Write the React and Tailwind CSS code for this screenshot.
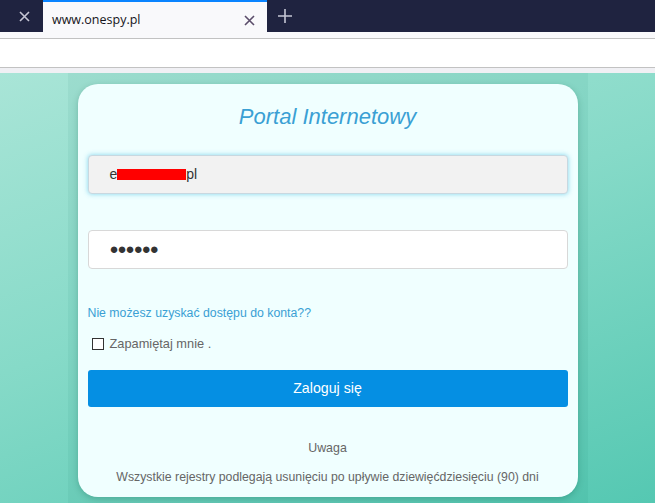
export default function App() {
  return (
    <div className="w-[655px] h-[503px] flex flex-col overflow-hidden" style={{ fontFamily: '"Liberation Sans", Arial, sans-serif' }}>
      {/* browser chrome */}
      <div className="h-[32px] bg-[#1f2340] flex items-stretch relative">
        <div className="w-[43px] flex items-center justify-center">
          <svg width="11" height="11" viewBox="0 0 11 11" className="ml-[6px]">
            <path d="M1 1L10 10M10 1L1 10" stroke="#c5c6d4" strokeWidth="1.6" />
          </svg>
        </div>
        <div className="w-[224px] bg-[#f9f9fb] border-t-2 border-[#0a84ff] flex items-center h-[38px] z-10">
          <span className="ml-[9px] text-[12.5px] text-[#15141a] flex-1" style={{ fontFamily: '"Open Sans", "Noto Sans", sans-serif' }}>www.onespy.pl</span>
          <svg width="11" height="11" viewBox="0 0 11 11" className="mr-[12px]">
            <path d="M1 1L10 10M10 1L1 10" stroke="#5b4d6a" strokeWidth="1.6" />
          </svg>
        </div>
        <div className="w-[36px] flex items-center justify-center">
          <svg width="14" height="14" viewBox="0 0 14 14">
            <path d="M7 0V14M0 7H14" stroke="#c5c6d4" strokeWidth="1.6" />
          </svg>
        </div>
      </div>
      <div className="h-[7px] bg-[#f9f9fb] border-b border-[#c2c2c2]" />
      <div className="h-[29px] bg-white border-b border-[#c2c2c2]" />
      <div className="h-[5px] bg-[#f0f0f4]" />
      {/* page */}
      <div className="flex-1 flex justify-center bg-[linear-gradient(160deg,#a9e5d7_0%,#86dac8_45%,#55c8b2_100%)]">
        <div className="w-[520px] px-[10px] pt-[11px] bg-[rgba(0,110,90,0.06)]">
          <div className="h-[413px] rounded-[20px] bg-[#f0ffff] shadow-[0_2px_6px_rgba(0,80,60,0.25)] px-[10px] pt-[19px] flex flex-col">
            <h1 className="text-center italic text-[22px] leading-[28px] text-[#3aa0d4]">Portal Internetowy</h1>
            <div className="mt-[24px] h-[39px] rounded-[4px] bg-[#f2f2f2] border border-[#c8d8e0] shadow-[0_0_5px_rgba(100,200,230,0.8)] flex items-center pl-[21px] text-[14px] text-[#333]">
              <span>e</span>
              <span className="inline-block w-[69px] h-[11px] bg-[#ff0000]" />
              <span>pl</span>
            </div>
            <div className="mt-[36px] h-[39px] rounded-[4px] bg-white border border-[#d8d8d8] flex items-center pl-[21px] text-[#333]">
              <span className="text-[15px] tracking-[-1px] font-bold">●●●●●●</span>
            </div>
            <a className="mt-[36px] text-[12.3px] leading-[16px] text-[#3aa0d4]">Nie możesz uzyskać dostępu do konta??</a>
            <div className="mt-[13px] flex items-center pl-[4px]">
              <span className="w-[12px] h-[12px] border border-[#333] bg-white" />
              <span className="ml-[6px] text-[12.8px] text-[#666]">Zapamiętaj mnie .</span>
            </div>
            <button className="mt-[17px] h-[37px] rounded-[3px] bg-[#058fe3] text-white text-[14.2px] flex items-center justify-center">Zaloguj się</button>
            <div className="mt-[33px] text-center text-[12.4px] leading-[16px] text-[#666]">Uwaga</div>
            <div className="mt-[13px] text-center text-[12.3px] leading-[16px] text-[#666]">Wszystkie rejestry podlegają usunięciu po upływie dziewięćdziesięciu (90) dni</div>
          </div>
        </div>
      </div>
    </div>
  );
}
